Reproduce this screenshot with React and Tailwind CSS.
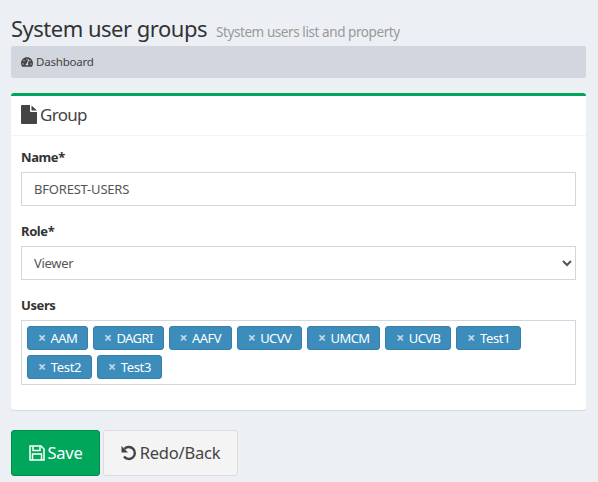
import React from "react";
import { clsx } from "clsx";
import { FaTachometerAlt } from "react-icons/fa";

const row1 = ["AAM", "DAGRI", "AAFV", "UCVV", "UMCM", "UCVB", "Test1"];
const row2 = ["Test2", "Test3"];

const Tag = ({ label }) => (
  <span
    className={clsx(
      "flex items-center h-6 pl-[10px] pr-[9.700px] gap-[5px] bg-[#3c8dbc] border border-[#367fa9] rounded-[3px] text-white text-[13px] leading-none",
      label.startsWith("Test") ? "tracking-[-0.3px]" : "tracking-[-0.55px]"
    )}
  >
    <span className="text-[#c4d9e8] text-[14px] font-bold">×</span>
    {label}
  </span>
);

const FileIcon = () => (
  <svg viewBox="0 0 16 19" className="w-4 h-[19px] fill-[#444]">
    <path d="M1 0h8v6a1 1 0 0 0 1 1h6v11a1 1 0 0 1-1 1H1a1 1 0 0 1-1-1V1a1 1 0 0 1 1-1zM10.500 0.500 16 5.500h-5.500z" />
  </svg>
);

const SaveIcon = () => (
  <svg viewBox="0 0 16 16" className="w-4 h-4 fill-none stroke-white stroke-[1.500]">
    <path d="M1 1h11l3 3v11H1z" />
    <path d="M4 1v4.500h7V1M3.500 15V9h9v6" />
  </svg>
);

const UndoIcon = () => (
  <svg viewBox="0 0 16 16" className="w-4 h-4">
    <path d="M3.500 3.800A6 6 0 1 1 3 11.500" className="fill-none stroke-[#444] stroke-[2.400]" />
    <path d="M0.500 1v6.500H7z" className="fill-[#444]" />
  </svg>
);

const App = () => {
  return (
    <div className="w-[598px] h-[482px] overflow-hidden bg-[#ecf0f5] pl-[11px] pr-[12px] text-[#333] font-['Noto_Sans',sans-serif]">
      {/* Page title */}
      <div className="flex items-baseline gap-[9px] h-[46px] pt-[11px]">
        <h1 className="text-[22px] tracking-[-0.5px] leading-[34px] text-[#333]">System user groups</h1>
        <small className="text-[13.500px] tracking-[-0.42px] text-[#999]">Stystem users list and property</small>
      </div>

      {/* Breadcrumb */}
      <div className="flex items-center gap-[3px] h-8 px-[10px] bg-[#d2d6de] rounded-[2px] text-[11.500px] tracking-[-0.2px] text-[#444]">
        <FaTachometerAlt className="w-3 h-3" />
        <span>Dashboard</span>
      </div>

      {/* Card */}
      <div className="mt-[15px] h-[317px] bg-white border-t-[3px] border-[#00a65a] rounded-[3px] shadow-[0_1px_1px_rgba(0,0,0,0.1)]">
        <div className="flex items-center gap-[3px] h-10 px-[10px] pb-[2px] border-b border-[#f4f4f4] text-[17px] tracking-[-0.7px] text-[#444]">
          <FileIcon />
          <span>Group</span>
        </div>

        <div className="px-[10px] pt-[11px]">
          <label className="block text-[13px] font-bold tracking-[-0.4px] leading-5 text-[#333]">Name*</label>
          <input
            readOnly
            value="BFOREST-USERS"
            className="block w-full h-[34px] mt-[5px] px-3 border border-[#d2d6de] bg-white text-[13px] tracking-[-0.2px] text-[#555] outline-none"
          />

          <label className="block mt-[15px] text-[13px] font-bold tracking-[-0.4px] leading-5 text-[#333]">Role*</label>
          <select
            defaultValue="Viewer"
            className="block w-full h-[34px] mt-[5px] px-2 border border-[#d2d6de] bg-white text-[13px] tracking-[-0.3px] text-[#555] outline-none"
          >
            <option>Viewer</option>
          </select>

          <label className="block mt-[15px] text-[13px] font-bold tracking-[-0.4px] leading-5 text-[#333]">Users</label>
          <div className="mt-[5px] h-[65px] border border-[#d2d6de] pl-[5px] pt-[5px] flex flex-col gap-[5px]">
            <div className="flex gap-[5px]">
              {row1.map((u) => (
                <Tag key={u} label={u} />
              ))}
            </div>
            <div className="flex gap-[5px]">
              {row2.map((u) => (
                <Tag key={u} label={u} />
              ))}
            </div>
          </div>
        </div>
      </div>

      {/* Actions */}
      <div className="flex gap-[3px] mt-5">
        <button className="flex items-center justify-center gap-[3px] w-[89px] h-[46px] bg-[#00a65a] border border-[#008d4c] rounded-[3px] text-white text-[16.500px] tracking-[-0.3px]">
          <SaveIcon />
          Save
        </button>
        <button className="flex items-center justify-center gap-[3px] w-[135px] h-[46px] bg-[#f4f4f4] border border-[#ddd] rounded-[3px] text-[#444] text-[16.500px] tracking-[-0.2px]">
          <UndoIcon />
          Redo/Back
        </button>
      </div>
    </div>
  );
};

export default App;
